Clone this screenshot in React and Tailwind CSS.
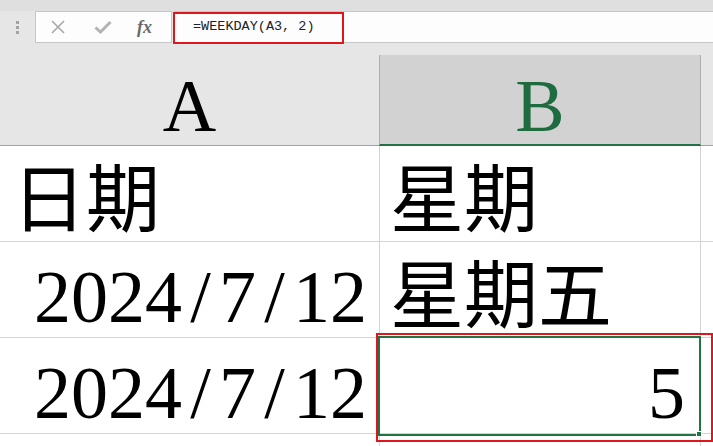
export default function App() {
  const slash = <span className="inline-block w-[37px] text-center">/</span>;

  return (
    <div className="relative w-[713px] h-[446px] overflow-hidden bg-white font-['Liberation_Serif','Noto_Sans_CJK_SC',serif] text-black">
      {/* formula bar */}
      <div className="h-[43px] bg-[#e6e6e6] flex flex-col">
        <div className="h-[11px] bg-[#dfdfdf]" />
        <div className="flex-1 flex">
          <div className="w-[35px] flex flex-col items-center justify-center gap-[2px]">
            <span className="w-[3px] h-[3px] bg-[#a3a3a3]" />
            <span className="w-[3px] h-[3px] bg-[#a3a3a3]" />
            <span className="w-[3px] h-[3px] bg-[#a3a3a3]" />
          </div>
          <div className="w-[137px] border border-[#c6c6c6] bg-[#fdfdfd] flex items-center">
            <svg className="ml-[14px]" width="16" height="16" viewBox="0 0 16 16">
              <path d="M2 2 L14 14 M14 2 L2 14" stroke="#a8a8a8" strokeWidth="1.6" fill="none" />
            </svg>
            <svg className="ml-[28px]" width="18" height="14" viewBox="0 0 18 14">
              <path d="M1.5 7.5 L6.5 12 L16.5 2" stroke="#b3b3b3" strokeWidth="3" fill="none" />
            </svg>
            <span className="ml-[25px] font-['Liberation_Serif',serif] italic font-bold text-[18px] leading-none text-[#6a6a6a]">
              fx
            </span>
          </div>
          <div className="flex-1 ml-[2px] border-y border-l border-[#c6c6c6] bg-[#fdfdfd] flex items-center pl-[18px] font-['Liberation_Mono',monospace] text-[13.5px] text-[#222]">
            =WEEKDAY(A3, 2)
          </div>
        </div>
      </div>

      {/* column headers */}
      <div className="h-[12px] bg-[#e6e6e6]" />
      <div className="flex h-[91px] text-[74px] leading-none">
        <div className="w-[379px] bg-[#e6e6e6] border-b border-[#a3a3a3] flex items-end justify-center pb-[2px]">
          A
        </div>
        <div className="w-[322px] bg-[#d2d2d2] border-x border-[#ababab] border-b-2 border-b-[#217346] flex items-end justify-center pb-[1px] text-[#1f6b40]">
          B
        </div>
        <div className="flex-1 bg-[#e6e6e6] border-b border-[#a3a3a3]" />
      </div>

      {/* rows */}
      <div className="text-[74px] leading-none">
        <div className="flex h-[96px] border-b border-[#d4d4d4]">
          <div className="w-[380px] border-r border-[#d4d4d4] flex items-end pl-[12px] pb-[3px]">日期</div>
          <div className="w-[321px] border-r border-[#d4d4d4] flex items-end pl-[10px] pb-[3px]">星期</div>
          <div className="flex-1" />
        </div>
        <div className="flex h-[96px] border-b border-[#d4d4d4]">
          <div className="w-[380px] border-r border-[#d4d4d4] flex items-end justify-end pr-[12px] pb-[3px]">
            <span>2024{slash}7{slash}12</span>
          </div>
          <div className="w-[321px] border-r border-[#d4d4d4] flex items-end pl-[10px] pb-[3px]">星期五</div>
          <div className="flex-1" />
        </div>
        <div className="flex h-[96px] border-b border-[#d4d4d4]">
          <div className="w-[380px] border-r border-[#d4d4d4] flex items-end justify-end pr-[12px] pb-[3px]">
            <span>2024{slash}7{slash}12</span>
          </div>
          <div className="w-[321px] border-r border-[#d4d4d4] flex items-end justify-end pr-[15px] pb-[3px]">5</div>
          <div className="flex-1" />
        </div>
        <div className="flex h-[12px]">
          <div className="w-[380px] border-r border-[#d4d4d4]" />
          <div className="w-[321px] border-r border-[#d4d4d4]" />
        </div>
      </div>

      {/* selection + annotations */}
      <div className="absolute left-[378px] top-[336px] w-[323px] h-[100px] border-2 border-[#217346]" />
      <div className="absolute left-[696px] top-[431px] w-[6px] h-[6px] bg-[#217346] border border-white" />
      <div className="absolute left-[376px] top-[333px] w-[337px] h-[109px] border-2 border-[#e0161e]" />
      <div className="absolute left-[173px] top-[12px] w-[171px] h-[32px] border-2 border-[#e0161e]" />
    </div>
  );
}
